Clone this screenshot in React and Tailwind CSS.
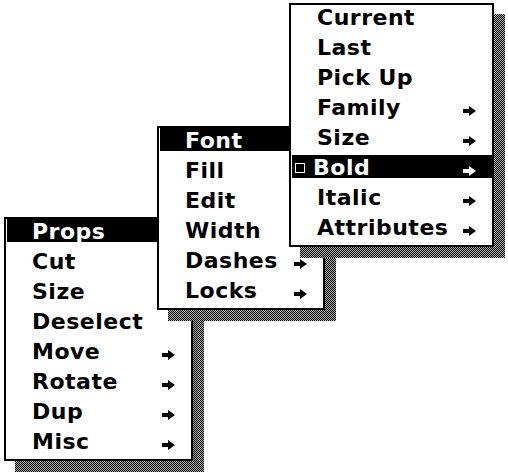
// Three cascading pop-up menus (Props > Font > Bold) with dithered drop shadows.

const SHADOW =
  'bg-[conic-gradient(#000_25%,#b4b4b4_0_50%,#000_0_75%,#b4b4b4_0)] [background-size:2px_2px]'

const PROPS = [
  { label: 'Props', hl: true },
  { label: 'Cut' },
  { label: 'Size' },
  { label: 'Deselect' },
  { label: 'Move', arrow: true },
  { label: 'Rotate', arrow: true },
  { label: 'Dup', arrow: true },
  { label: 'Misc', arrow: true },
]

const FONT = [
  { label: 'Font', hl: true },
  { label: 'Fill' },
  { label: 'Edit' },
  { label: 'Width' },
  { label: 'Dashes', arrow: true },
  { label: 'Locks', arrow: true },
]

const BOLD = [
  { label: 'Current' },
  { label: 'Last' },
  { label: 'Pick Up' },
  { label: 'Family', arrow: true },
  { label: 'Size', arrow: true },
  { label: 'Bold', arrow: true, hl: true, check: true },
  { label: 'Italic', arrow: true },
  { label: 'Attributes', arrow: true },
]

function Arrow({ white }) {
  return (
    <svg
      width="13"
      height="10"
      viewBox="0 0 13 10"
      className="shrink-0 mt-[11px]"
      fill={white ? '#fff' : '#000'}
    >
      <rect x="0" y="3" width="7" height="4" />
      <path d="M6 0 L13 5 L6 10 Z" />
    </svg>
  )
}

function Row({ item }) {
  return (
    <div className="h-[30px] pl-px">
      <div
        className={`flex items-start h-[23px] leading-[25px] pr-[16px] ${
          item.check ? 'pl-[3px]' : 'pl-[25px]'
        } ${item.hl ? 'bg-black text-white' : 'text-black'}`}
      >
        {item.check && (
          <span className="shrink-0 w-[10px] h-[10px] mt-[8px] mr-[8px] border-[1.5px] border-white" />
        )}
        <span className="flex-1 whitespace-nowrap">{item.label}</span>
        {item.arrow && <Arrow white={item.hl} />}
      </div>
    </div>
  )
}

function Menu({ items, className }) {
  return (
    <div className={`absolute ${className}`}>
      <div className={`absolute left-[11px] top-[11px] w-full h-full ${SHADOW}`} />
      <div className="relative flex flex-col border-2 border-black bg-white">
        {items.map((item) => (
          <Row key={item.label} item={item} />
        ))}
      </div>
    </div>
  )
}

export default function App() {
  return (
    <div className="relative w-[508px] h-[474px] overflow-hidden bg-white font-['DejaVu_Sans',Verdana,sans-serif] font-bold text-[22px] tracking-[0.5px]">
      <Menu items={PROPS} className="left-[4px] top-[217px] w-[189px]" />
      <Menu items={FONT} className="left-[157px] top-[126px] w-[168px]" />
      <Menu items={BOLD} className="left-[289px] top-[3px] w-[205px]" />
    </div>
  )
}
